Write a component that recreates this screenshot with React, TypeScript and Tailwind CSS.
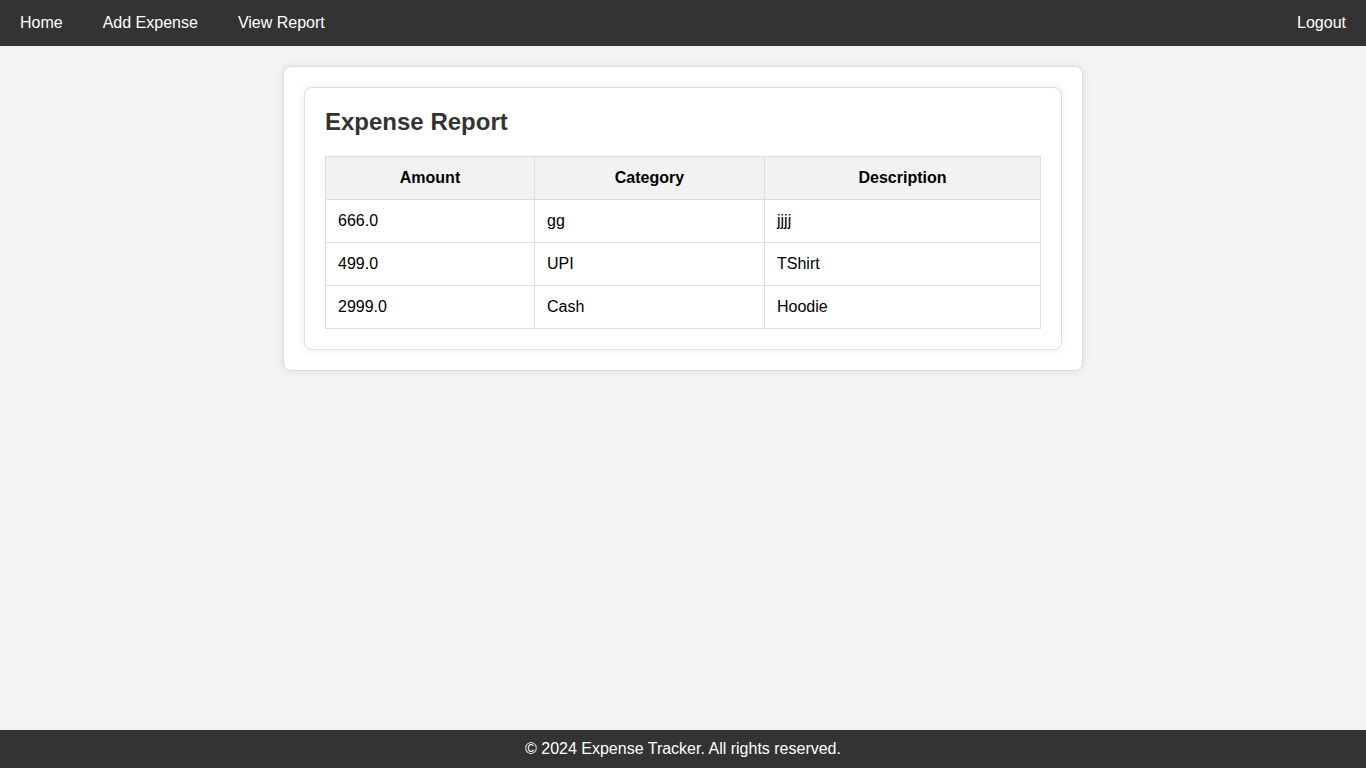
const expenses = [
  { amount: '666.0', category: 'gg', description: 'jjjj' },
  { amount: '499.0', category: 'UPI', description: 'TShirt' },
  { amount: '2999.0', category: 'Cash', description: 'Hoodie' },
];

export default function App() {
  return (
    <div className="min-h-screen flex flex-col bg-[#f4f4f4] text-[16px] font-['Liberation_Sans',Arial,sans-serif]">
      {/* Navbar */}
      <nav className="h-[46px] bg-[#333] flex items-center justify-between text-white">
        <div className="flex">
          <a href="#" className="px-5 leading-[46px]">Home</a>
          <a href="#" className="px-5 leading-[46px]">Add Expense</a>
          <a href="#" className="px-5 leading-[46px]">View Report</a>
        </div>
        <a href="#" className="px-5 leading-[46px]">Logout</a>
      </nav>

      {/* Main */}
      <main className="flex-1 pt-5">
        <div className="w-[800px] mx-auto bg-white border border-[#ddd] rounded-lg p-5 shadow-[0_0_10px_rgba(0,0,0,0.1)]">
          <div className="bg-white border border-[#ddd] rounded-lg p-5 shadow-[0_0_10px_rgba(0,0,0,0.08)]">
            <h2 className="text-[24px] font-bold text-[#333] leading-[28px] mb-5">Expense Report</h2>
            <table className="w-full border-collapse text-black">
              <thead>
                <tr className="bg-[#f2f2f2]">
                  <th className="w-[209px] border border-[#ddd] px-3 h-[43px] font-bold text-center">Amount</th>
                  <th className="w-[230px] border border-[#ddd] px-3 h-[43px] font-bold text-center">Category</th>
                  <th className="border border-[#ddd] px-3 h-[43px] font-bold text-center">Description</th>
                </tr>
              </thead>
              <tbody>
                {expenses.map((e, i) => (
                  <tr key={i}>
                    <td className="border border-[#ddd] px-3 h-[43px]">{e.amount}</td>
                    <td className="border border-[#ddd] px-3 h-[43px]">{e.category}</td>
                    <td className="border border-[#ddd] px-3 h-[43px]">{e.description}</td>
                  </tr>
                ))}
              </tbody>
            </table>
          </div>
        </div>
      </main>

      {/* Footer */}
      <footer className="h-[38px] bg-[#333] text-white flex items-center justify-center">
        © 2024 Expense Tracker. All rights reserved.
      </footer>
    </div>
  );
}
